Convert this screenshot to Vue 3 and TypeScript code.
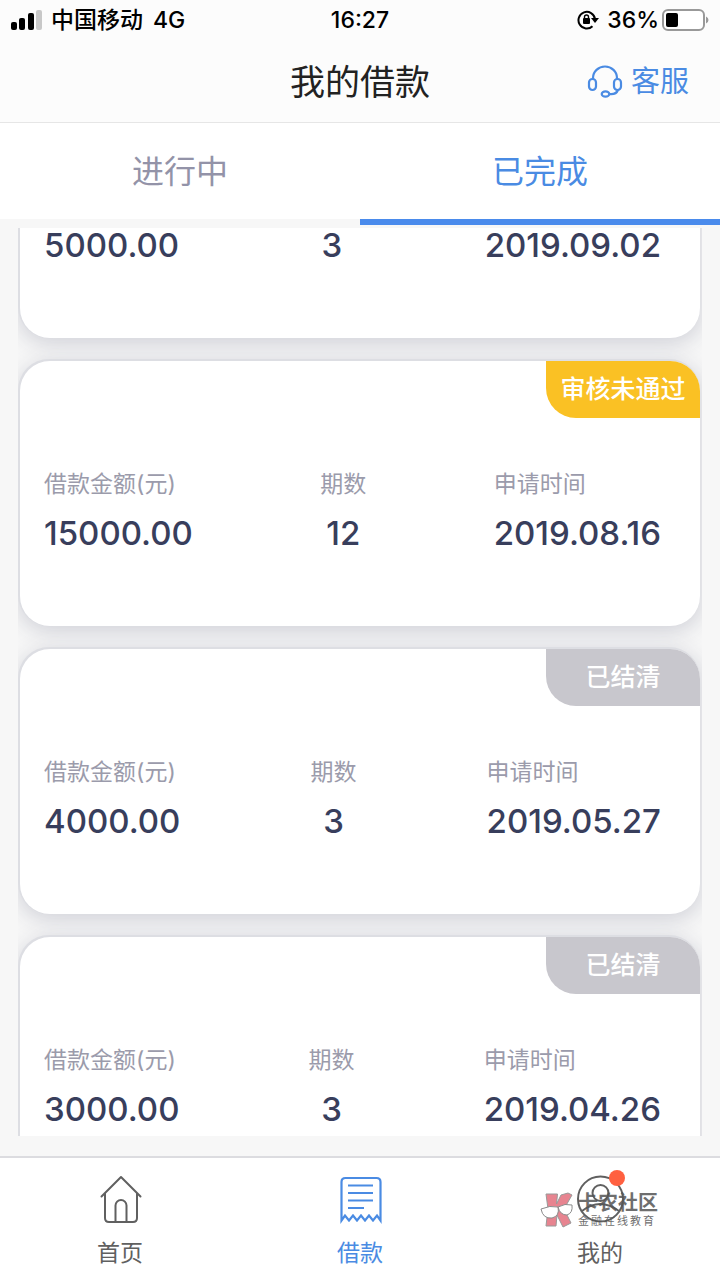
<script setup lang="ts">
import { onMounted, ref } from 'vue'

interface Loan {
  id: number
  amount: string
  periods: number
  date: string
  status: string
  rejected: boolean
}

const loans: Loan[] = [
  { id: 1, amount: '5000.00', periods: 3, date: '2019.09.02', status: '已结清', rejected: false },
  { id: 2, amount: '15000.00', periods: 12, date: '2019.08.16', status: '审核未通过', rejected: true },
  { id: 3, amount: '4000.00', periods: 3, date: '2019.05.27', status: '已结清', rejected: false },
  { id: 4, amount: '3000.00', periods: 3, date: '2019.04.26', status: '已结清', rejected: false },
]

const tabs = ['进行中', '已完成']
const activeTab = ref(1)
const list = ref<HTMLElement | null>(null)

// The list opens part-way down its first card.
onMounted(() => {
  if (list.value) list.value.scrollTop = 177
})
</script>

<template>
  <div class="app">
    <div class="status-bar">
      <div class="status-side">
        <svg class="signal" width="32" height="20" viewBox="0 0 32 20" aria-hidden="true">
          <rect x="0" y="12" width="6" height="8" rx="2" />
          <rect x="8" y="8" width="6" height="12" rx="2" />
          <rect x="17" y="3" width="6" height="17" rx="2" />
          <rect x="25" y="0" width="6" height="20" rx="2" fill="#c8c8c8" />
        </svg>
        <span class="carrier">中国移动</span>
        <span>4G</span>
      </div>
      <span>16:27</span>
      <div class="status-side right">
        <svg class="lock" width="22" height="20" viewBox="0 0 22 20" aria-hidden="true">
          <path d="M15.500 16.200A8.300 8.300 0 1 1 18 9" fill="none" stroke="#000" stroke-width="2" />
          <path d="M14 8h8l-4 5z" />
          <rect x="6" y="8" width="7" height="6" rx="1" />
          <path d="M7.500 8.500V7a2 2 0 0 1 4 0v1.500" fill="none" stroke="#000" stroke-width="1.400" />
        </svg>
        <span>36%</span>
        <svg class="battery" width="47" height="22" viewBox="0 0 47 22" aria-hidden="true">
          <rect x="1" y="1" width="41" height="20" rx="5" fill="#fff" stroke="#999" stroke-width="2" />
          <rect x="4" y="4" width="12" height="14" rx="2" />
          <path d="M44 7.500q2.500 1 2.500 3.500T44 14.500z" fill="#999" />
        </svg>
      </div>
    </div>

    <header class="header">
      <h1>我的借款</h1>
      <a href="#service" class="service">
        <svg width="36" height="34" viewBox="0 0 36 34" fill="none" stroke="currentColor" stroke-width="2.200" aria-hidden="true">
          <path d="M6 14v-1a12 11.500 0 0 1 24 0v1" />
          <rect x="2" y="14" width="7" height="11" rx="3.500" />
          <rect x="27" y="14" width="7" height="11" rx="3.500" />
          <path d="M31 25q-2 5-9 4" />
          <ellipse cx="18.500" cy="29" rx="3.800" ry="2.600" />
        </svg>
        <span>客服</span>
      </a>
    </header>

    <nav class="tabs">
      <button
        v-for="(tab, i) in tabs"
        :key="tab"
        type="button"
        :class="{ active: activeTab === i }"
        @click="activeTab = i"
      >{{ tab }}</button>
    </nav>

    <main ref="list" class="list">
      <article v-for="loan in loans" :key="loan.id" class="card">
        <span class="badge" :class="{ rejected: loan.rejected }">{{ loan.status }}</span>
        <dl>
          <div>
            <dt>借款金额(元)</dt>
            <dd>{{ loan.amount }}</dd>
          </div>
          <div class="center">
            <dt>期数</dt>
            <dd>{{ loan.periods }}</dd>
          </div>
          <div>
            <dt>申请时间</dt>
            <dd>{{ loan.date }}</dd>
          </div>
        </dl>
      </article>
    </main>

    <nav class="bottom-nav">
      <a href="#home">
        <svg width="50" height="54" viewBox="0 0 50 54" fill="none" stroke="currentColor" stroke-width="2" stroke-linecap="round" stroke-linejoin="round" aria-hidden="true">
          <path d="M6.500 24.500 26 5l19.500 19.500M10 21.500V46q0 4 4 4h24q4 0 4-4V21.500M20.500 50V33.500a5.500 5.500 0 0 1 11 0V50" />
        </svg>
        <span>首页</span>
      </a>
      <a href="#loans" class="current">
        <svg width="50" height="54" viewBox="0 0 50 54" fill="none" stroke="currentColor" stroke-width="2.200" aria-hidden="true">
          <path d="M6.500 48.500V10q0-4 4-4h31q4 0 4 4v38.500l-3.500-5-4 5-4-5-4 5-4-5-4 5-4-5-4 5-4-5z" />
          <path d="M13 13.500h25M13 21h25M13 28.500h25M13 36h16" />
        </svg>
        <span>借款</span>
      </a>
      <a href="#mine">
        <span class="icon-wrap">
          <svg width="50" height="54" viewBox="0 0 50 54" fill="none" stroke="currentColor" stroke-width="2" aria-hidden="true">
            <circle cx="25.500" cy="27" r="22.500" />
            <circle cx="25.500" cy="21" r="8" />
            <path d="M7 39q18-14 37 0" />
          </svg>
          <i class="dot"></i>
        </span>
        <span>我的</span>
      </a>
      <div class="watermark">
        <svg width="34" height="36" viewBox="0 0 34 36" aria-hidden="true">
          <path d="M6 2h11.500l-1 10L21 3l7-2 4 2-8 14 7 14-8 4-6-12-1 11H6l2-17z" fill="#e36f7d" stroke="#888" />
          <path d="M1 17q9-4 17-2 2 9-6 11-9 1-11-9zM18 15q7-4 14-2 1 8-5 10-7 0-9-8z" fill="#fff" stroke="#777" />
        </svg>
        <div class="watermark-text">
          <strong>卡农社区</strong>
          <small>金融在线教育</small>
        </div>
      </div>
    </nav>
  </div>
</template>

<style>
body {
  margin: 0;
}
</style>

<style scoped>
.app {
  display: flex;
  flex-direction: column;
  height: 100vh;
  overflow: hidden;
  background: #f7f7f7;
  font-family: Inter, "Noto Sans CJK SC", sans-serif;
}

.status-bar {
  display: flex;
  align-items: center;
  height: 40px;
  padding: 0 11px;
  background: #fcfcfc;
  color: #000;
  font-size: 23px;
  font-weight: 500;
  line-height: 38px;
  white-space: nowrap;
}

.status-side {
  display: flex;
  flex: 1;
  align-items: center;
}

.status-side.right {
  justify-content: flex-end;
}

.carrier {
  margin: 0 10px 0 8px;
}

.lock {
  margin-right: 8px;
}

.battery {
  margin-left: 3px;
}

.header {
  display: grid;
  grid-template-columns: 1fr auto 1fr;
  align-items: center;
  box-sizing: border-box;
  height: 83px;
  padding: 2px 31px 0;
  border-bottom: 1px solid #e6e6e6;
  background: #fcfcfc;
}

.header h1 {
  grid-column: 2;
  margin: 0;
  color: #222;
  font-size: 35px;
  font-weight: 400;
  line-height: 48px;
}

.service {
  display: flex;
  align-items: center;
  justify-self: end;
  gap: 8px;
  color: #4a8be3;
  font-size: 29px;
  line-height: 40px;
  text-decoration: none;
}

.tabs {
  display: flex;
  height: 105px;
  flex-shrink: 0;
}

.tabs button {
  flex: 1;
  height: 102px;
  padding: 0 0 4px;
  border: 0;
  border-bottom: 6px solid #f7f7f7;
  background: #fff;
  color: #9393a8;
  font: inherit;
  font-size: 32px;
}

.tabs button.active {
  border-bottom-color: #4a8bec;
  color: #4a8be3;
}

.list {
  flex: 1;
  min-height: 0;
  margin: 0 18px;
  padding: 22px 2px 0;
  overflow-y: auto;
  scrollbar-width: none;
}

.card {
  display: flex;
  flex-direction: column;
  height: 265px;
  margin-bottom: 23px;
  border-radius: 30px;
  background: #fff;
  box-shadow: -1px -1px 0 1px #dddee3, 0 4px 22px 2px #d0d1d8;
}

.badge {
  align-self: flex-end;
  box-sizing: border-box;
  width: 154px;
  height: 57px;
  border-radius: 0 30px 0 30px;
  background: #c8c7cd;
  color: #fff;
  font-size: 25px;
  font-weight: 500;
  line-height: 56px;
  text-align: center;
}

.badge.rejected {
  background: #fac124;
}

dl {
  display: flex;
  justify-content: space-between;
  margin: 0;
  padding: 49px 39px 0 24px;
}

.center {
  text-align: center;
}

dt {
  color: #9b9bab;
  font-size: 23px;
  line-height: 34px;
}

dd {
  margin: 10px 0 0;
  color: #383e5c;
  font-size: 33px;
  font-weight: 500;
  line-height: 44px;
}

.bottom-nav {
  position: relative;
  display: flex;
  height: 122px;
  margin-top: 20px;
  border-top: 2px solid #dcdce0;
  background: #fff;
}

.bottom-nav a {
  display: flex;
  flex: 1;
  flex-direction: column;
  align-items: center;
  padding-top: 14px;
  color: #606060;
  font-size: 23px;
  line-height: 34px;
  gap: 10px;
  text-decoration: none;
}

.bottom-nav svg {
  display: block;
}

.bottom-nav a.current {
  color: #4a8be3;
}

.icon-wrap {
  position: relative;
}

.dot {
  position: absolute;
  top: -2px;
  right: 0;
  width: 16px;
  height: 16px;
  border-radius: 50%;
  background: #ff6040;
}

.watermark {
  position: absolute;
  right: 62px;
  top: 34px;
  display: flex;
  align-items: center;
  gap: 4px;
  color: #555;
  opacity: 0.85;
  pointer-events: none;
}

.watermark-text {
  display: flex;
  flex-direction: column;
}

.watermark strong {
  font-size: 20px;
  line-height: 22px;
}

.watermark small {
  font-size: 11px;
  letter-spacing: 2px;
  line-height: 14px;
}
</style>
